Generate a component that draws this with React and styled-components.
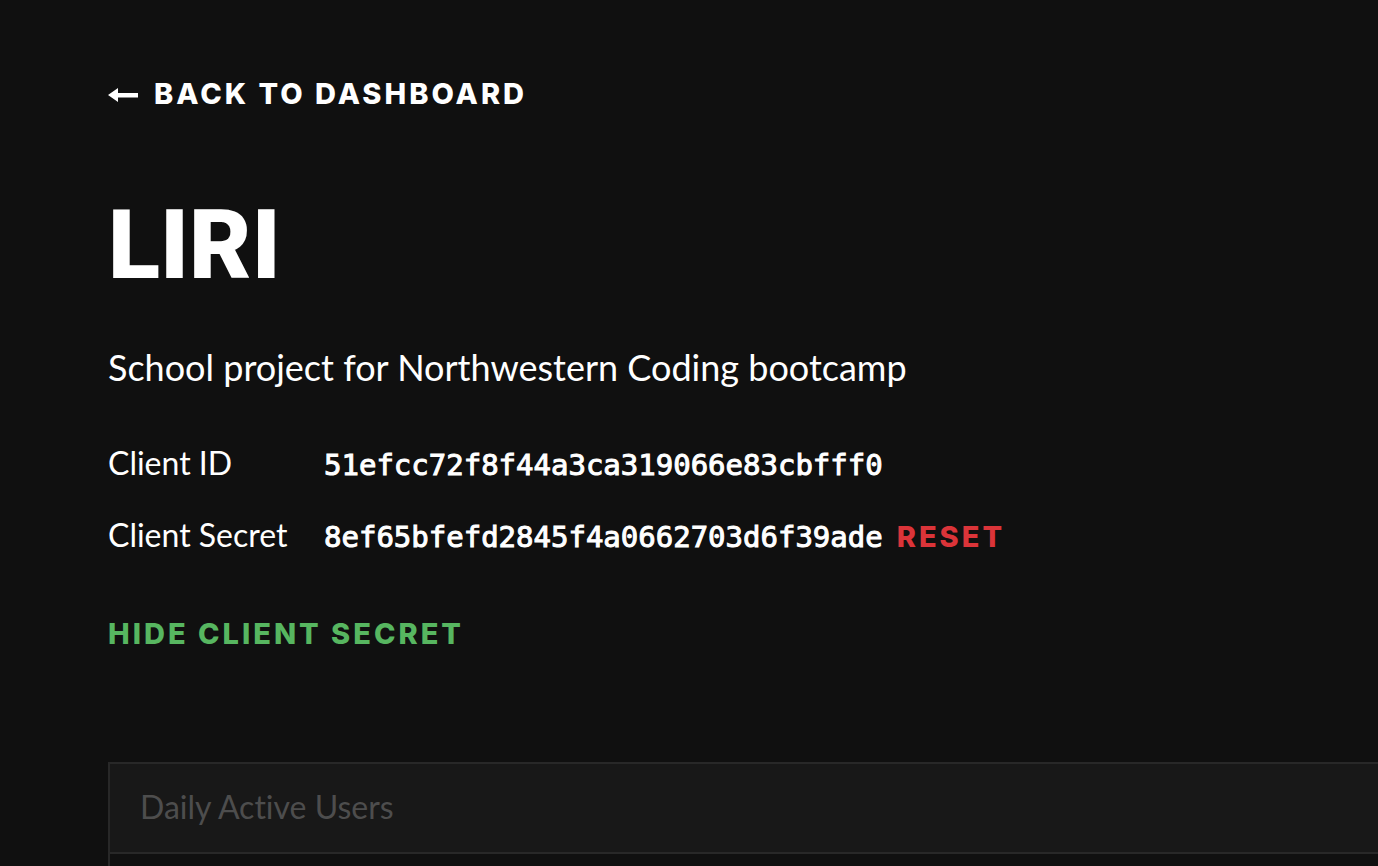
import React from "react";
import styled, { createGlobalStyle, css } from "styled-components";

const GlobalStyle = createGlobalStyle`
  *, *::before, *::after { box-sizing: border-box; }
  body {
    margin: 0;
    background: #101010;
    color: #fff;
    font-family: Lato, "Liberation Sans", sans-serif;
    font-variant-ligatures: none;
  }
`;

const Page = styled.main`
  display: flex;
  flex-direction: column;
  align-items: flex-start;
  min-height: 100vh;
  padding: 74px 0 0 108px;
`;

const actionText = css`
  font-family: Inter, "Liberation Sans", sans-serif;
  font-size: 29px;
  line-height: 40px;
  font-weight: 800;
  letter-spacing: 3px;
  text-transform: uppercase;
`;

const BackLink = styled.a`
  ${actionText}
  display: flex;
  align-items: center;
  gap: 16px;
  color: #fff;
  text-decoration: none;
`;

const Title = styled.h1`
  margin: 83px 0 0;
  font-family: Roboto, "Liberation Sans", sans-serif;
  font-size: 96px;
  line-height: 96px;
  font-weight: 900;
`;

const Description = styled.p`
  margin: 50px 0 0;
  font-size: 36px;
  line-height: 48px;
`;

const Credentials = styled.dl`
  margin: 36px 0 0;
`;

const Credential = styled.div`
  display: flex;
  align-items: baseline;
  height: 72px;
  line-height: 72px;
`;

const Label = styled.dt`
  width: 216px;
  font-size: 32px;
`;

const Value = styled.dd`
  display: flex;
  align-items: baseline;
  gap: 14px;
  margin: 0;
`;

const Code = styled.code`
  font-family: "DejaVu Sans Mono", monospace;
  font-size: 29px;
  -webkit-text-stroke: 1px currentColor;
`;

const ActionButton = styled.button`
  ${actionText}
  padding: 0;
  border: 0;
  background: none;
  color: ${({ $danger }) => ($danger ? "#db3439" : "#57b660")};
  cursor: pointer;
`;

const Toggle = styled(ActionButton)`
  margin-top: 43px;
`;

const Panel = styled.section`
  align-self: stretch;
  flex: 1;
  margin-top: 108px;
  border: solid #282828;
  border-width: 2px 0 0 2px;
`;

const PanelTitle = styled.h2`
  margin: 0;
  padding: 21px 30px 23px;
  border-bottom: 2px solid #282828;
  background: #181818;
  color: #4d4d4d;
  font-size: 32px;
  line-height: 44px;
  font-weight: 400;
`;

const ArrowLeft = () => (
  <svg width="30" height="16" viewBox="0 0 30 16" fill="currentColor" aria-hidden="true">
    <path d="M0 9 10 2V7H30V11.500H10V16Z" />
  </svg>
);

export default function App() {
  return (
    <>
      <GlobalStyle />
      <Page>
        <BackLink href="#dashboard">
          <ArrowLeft />
          Back to Dashboard
        </BackLink>
        <Title>LIRI</Title>
        <Description>School project for Northwestern Coding bootcamp</Description>
        <Credentials>
          <Credential>
            <Label>Client ID</Label>
            <Value>
              <Code>51efcc72f8f44a3ca319066e83cbfff0</Code>
            </Value>
          </Credential>
          <Credential>
            <Label>Client Secret</Label>
            <Value>
              <Code>8ef65bfefd2845f4a0662703d6f39ade</Code>
              <ActionButton type="button" $danger>Reset</ActionButton>
            </Value>
          </Credential>
        </Credentials>
        <Toggle type="button">Hide Client Secret</Toggle>
        <Panel>
          <PanelTitle>Daily Active Users</PanelTitle>
        </Panel>
      </Page>
    </>
  );
}
